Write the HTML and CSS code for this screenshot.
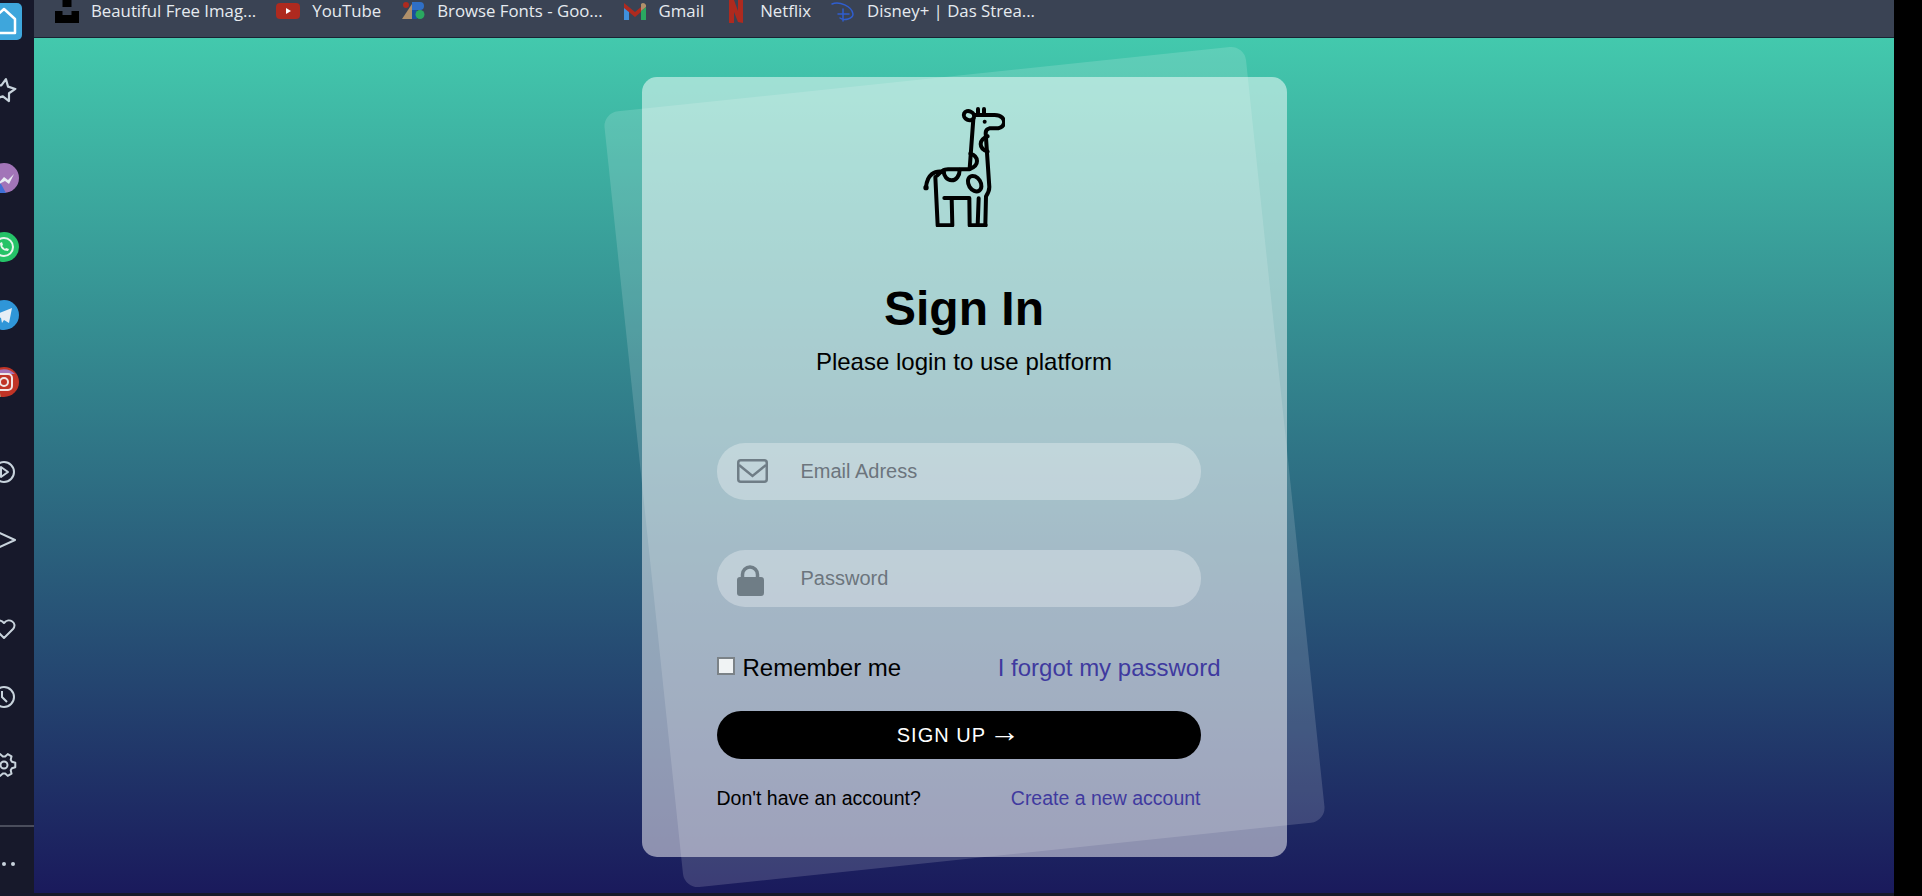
FILE: index.html
```html
<!DOCTYPE html>
<html lang="en">
<head>
    <meta charset="UTF-8">
    <title>Sign In</title>
    <link rel="stylesheet" href="styles.css">
</head>
<body>
    <div class="browser">
        <aside class="sidebar">
            <div class="side-groups">
                <div class="side-group">
                    <span class="side-icon home-tile">
                        <svg viewBox="0 0 30 30" width="30" height="30"><path d="M5 12 15 3l11 10v14H5z" fill="none" stroke="#fff" stroke-width="2.500" stroke-linejoin="round"/></svg>
                    </span>
                    <span class="side-icon">
                        <svg viewBox="0 0 30 30" width="30" height="30"><path d="M15 4l3.400 7 7.600 1-5.500 5.300 1.300 7.700-6.800-3.600-6.800 3.600 1.300-7.700L4 12l7.600-1z" transform="rotate(10 15 15)" fill="none" stroke="#c8d3dc" stroke-width="2.200" stroke-linejoin="round"/></svg>
                    </span>
                </div>
                <div class="side-group">
                    <span class="side-icon icon-up">
                        <svg viewBox="0 0 30 30" width="30" height="30"><circle cx="15" cy="15" r="15" fill="#a275b8"/><path d="M3 26 4 17 12 21 17 30H8z" fill="#3f6fd6"/><path d="M8 22l7-8 4 3 6-6-5 10-4-3z" fill="#e8edf2"/></svg>
                    </span>
                    <span class="side-icon">
                        <svg viewBox="0 0 30 30" width="30" height="30"><circle cx="15" cy="15" r="15" fill="#25c368"/><circle cx="15" cy="15" r="9" fill="none" stroke="#e8f5ee" stroke-width="2"/><path d="M11 11c0 5 3 8 8 8l1-2-3-1-1 1-3-3 1-1-1-3z" fill="#e8f5ee"/></svg>
                    </span>
                    <span class="side-icon">
                        <svg viewBox="0 0 30 30" width="30" height="30"><circle cx="15" cy="15" r="15" fill="#2f96d8"/><path d="M5 15 23 8l-3 15-5-3-2 3-1-5z" fill="#e6eef5"/></svg>
                    </span>
                    <span class="side-icon">
                        <svg viewBox="0 0 30 30" width="30" height="30"><circle cx="15" cy="15" r="15" fill="#c03426"/><path d="M4 7a15 15 0 0 1 22 0z" fill="#a275b8"/><path d="M2 22a15 15 0 0 0 10 8l-2-8z" fill="#b3966a"/><rect x="7" y="7" width="16" height="16" rx="4" fill="none" stroke="#f0e6e4" stroke-width="2"/><circle cx="15" cy="15" r="4" fill="none" stroke="#f0e6e4" stroke-width="2"/></svg>
                    </span>
                </div>
                <div class="side-group">
                    <span class="side-icon">
                        <svg viewBox="0 0 30 30" width="30" height="30"><circle cx="15" cy="15" r="10" fill="none" stroke="#c8d3dc" stroke-width="2"/><path d="M12 10l7 5-7 5z" fill="none" stroke="#c8d3dc" stroke-width="2" stroke-linejoin="round"/></svg>
                    </span>
                    <span class="side-icon">
                        <svg viewBox="0 0 30 30" width="30" height="30"><path d="M4 5l22 10L4 25" fill="none" stroke="#c8d3dc" stroke-width="2" stroke-linejoin="round"/></svg>
                    </span>
                </div>
                <div class="side-group">
                    <span class="side-icon icon-up">
                        <svg viewBox="0 0 30 30" width="30" height="30"><path d="M15 25 6 16c-5-6 4-12 9-6 5-6 14 0 9 6z" fill="none" stroke="#c8d3dc" stroke-width="2" stroke-linejoin="round"/></svg>
                    </span>
                    <span class="side-icon">
                        <svg viewBox="0 0 30 30" width="30" height="30"><circle cx="15" cy="15" r="10" fill="none" stroke="#c8d3dc" stroke-width="2"/><path d="M13 9v6l5 5" fill="none" stroke="#c8d3dc" stroke-width="2"/></svg>
                    </span>
                    <span class="side-icon">
                        <svg viewBox="0 0 30 30" width="30" height="30"><circle cx="15" cy="15" r="3.500" fill="none" stroke="#c8d3dc" stroke-width="2"/><polygon points="22.88,11.82 26.29,12.81 26.29,17.19 22.88,18.18 21.7,20.23 22.54,23.68 18.74,25.87 16.18,23.42 13.82,23.42 11.26,25.87 7.46,23.68 8.3,20.23 7.12,18.18 3.71,17.19 3.71,12.81 7.12,11.82 8.3,9.77 7.46,6.32 11.26,4.13 13.82,6.58 16.18,6.58 18.74,4.13 22.54,6.32 21.7,9.77" fill="none" stroke="#c8d3dc" stroke-width="2" stroke-linejoin="round"/></svg>
                    </span>
                </div>
            </div>
            <div class="side-foot">
                <span class="side-dots">
                    <i></i><i></i><i></i>
                </span>
            </div>
        </aside>

        <div class="main">
            <nav class="bookmarks">
                <a class="bookmark">
                    <svg viewBox="0 0 24 24" width="24" height="24"><path d="M7.500 0h9v7h-9zM0 11h7.500v4h9v-4H24v12H0z" fill="#000"/></svg>
                    <span>Beautiful Free Imag...</span>
                </a>
                <a class="bookmark">
                    <svg viewBox="0 0 24 24" width="24" height="24"><rect y="3" width="24" height="16" rx="4" fill="#ae2a1f"/><path d="M10 8l5 3-5 3z" fill="#fff"/></svg>
                    <span>YouTube</span>
                </a>
                <a class="bookmark">
                    <svg viewBox="0 0 24 24" width="24" height="24"><path d="M1 19 11 4v15z" fill="#b0906a"/><circle cx="5" cy="5" r="3" fill="#ae2a1f"/><path d="M11 2h8a4 4 0 0 1 0 8h-8z" fill="#2f6fc6"/><path d="M11 10h5v9h-5z" fill="#1c4f9c"/><circle cx="19" cy="14.500" r="4.500" fill="#2aa860"/></svg>
                    <span>Browse Fonts - Goo...</span>
                </a>
                <a class="bookmark">
                    <svg viewBox="0 0 24 24" width="24" height="24"><path d="M1 7v13h5V11z" fill="#3f8fdc"/><path d="M18 11v9h5V7z" fill="#2aa860"/><path d="M1 3l11 9 6-5v5l-6 5L1 8z" fill="#ae2a1f"/><path d="M18 4a3 3 0 0 1 5 3l-5 4z" fill="#b0906a"/></svg>
                    <span>Gmail</span>
                </a>
                <a class="bookmark">
                    <svg viewBox="0 0 24 24" width="24" height="24"><path d="M5 0h5l4 11V0h5v23l-5-1-4-10v11H5z" fill="#ae2a1f"/></svg>
                    <span>Netflix</span>
                </a>
                <a class="bookmark">
                    <svg viewBox="0 0 24 24" width="24" height="24"><path d="M1 4c7-3 20 2 21 10 0 5-9 7-13 4M12 9v12M7 14h11" fill="none" stroke="#2f5ed0" stroke-width="1.500" stroke-linecap="round"/></svg>
                    <span>Disney+ | Das Strea...</span>
                </a>
            </nav>

            <main class="page">
                <div class="card">
                    <svg class="logo" viewBox="128 50 246 360" width="82" height="120">
                        <g fill="none" stroke="#000" stroke-width="12" stroke-linecap="round" stroke-linejoin="round">
                            <path d="M293 56v17M311 56v17"/>
                            <ellipse cx="266" cy="76" rx="16" ry="13" transform="rotate(25 266 76)"/>
                            <path d="M281 74h62c20 0 30 12 28 24-2 12-12 16-26 16h-18c-8 2-11 8-11 14l11 162c0 12-6 22-10 28l-2 85"/>
                            <path d="M279 86l-11 149c0 1-2 2-5 2h-60c-14 0-20 6-32 18"/>
                            <path d="M187 244c-24-4-46 8-50 46"/>
                            <path d="M165 260l7 145h44l-2-82M192 323h75l1 82h48"/>
                            <path d="M295 324l-3 81"/>
                            <path d="M270 190c26 8 28 36 -2 46"/>
                            <path d="M190 240c0 18 10 30 24 30s24-14 24-32"/>
                            <path d="M322 138c-28 10-28 36 0 46"/>
                            <ellipse cx="283" cy="280" rx="18" ry="25" transform="rotate(-32 283 280)"/>
                        </g>
                        <circle cx="313" cy="94" r="6" fill="#000"/>
                        <circle cx="137" cy="292" r="8" fill="#000"/>
                    </svg>

                    <h1 class="title">Sign In</h1>
                    <p class="subtitle">Please login to use platform</p>

                    <form class="login-form">
                        <div class="field">
                            <svg class="field-icon mail-icon" viewBox="0 0 31 24" width="31" height="24"><rect x="1.250" y="1.250" width="28.500" height="21.500" rx="2.500" fill="none" stroke="#6f7d86" stroke-width="2.500"/><path d="M2 6l13.500 11L29 6" fill="none" stroke="#6f7d86" stroke-width="2.500"/></svg>
                            <input type="text" placeholder="Email Adress">
                        </div>
                        <div class="field">
                            <svg class="field-icon lock-icon" viewBox="0 0 31 31" width="31" height="31"><path d="M5.500 14V9.500a7.500 7.500 0 0 1 15 0V14" fill="none" stroke="#6f7d86" stroke-width="3.500"/><rect y="12" width="27" height="19" rx="3" fill="#6f7d86"/></svg>
                            <input type="password" placeholder="Password">
                        </div>

                        <div class="options">
                            <label class="remember"><input type="checkbox"> Remember me</label>
                            <a class="link">I forgot my password</a>
                        </div>

                        <button type="button" class="submit">SIGN UP <span class="arrow">&rarr;</span></button>

                        <div class="signup-row">
                            <span>Don't have an account?</span>
                            <a class="link">Create a new account</a>
                        </div>
                    </form>
                </div>
            </main>
        </div>
    </div>
</body>
</html>
```

FILE: styles.css
```css
/* browser frame around the login page */
html, body {
    margin: 0;
    height: 100%;
    background-color: #000;
    overflow: hidden;
}

.browser {
    display: flex;
    width: 1894px;
    height: 896px;
    background-color: #17192b;
}

/* sidebar is scrolled partly out of view on the left */
.sidebar {
    flex: 0 0 34px;
    display: flex;
    flex-direction: column;
    justify-content: space-between;
    overflow: hidden;
    padding-top: 6px;
}

.side-groups {
    display: flex;
    flex-direction: column;
    gap: 60px;
    margin-left: -11px;
}

.side-group {
    display: flex;
    flex-direction: column;
    gap: 37.5px;
}

.side-icon {
    display: block;
    width: 30px;
    height: 30px;
}

.side-icon svg {
    display: block;
}

.icon-up svg {
    margin-top: -1.5px;
}

.home-tile {
    width: 33px;
    margin: -3px 0;
    padding: 3px 0 4px;
    background-color: #3ea6dc;
    border-radius: 5px;
}

.side-foot {
    border-top: 2px solid #4a4d5c;
    height: 71px;
    display: flex;
    padding-top: 35px;
    box-sizing: border-box;
}

.side-dots {
    display: flex;
    gap: 5px;
    margin-left: -7px;
}

.side-dots i {
    width: 4px;
    height: 4px;
    border-radius: 50%;
    background-color: #c8d3dc;
}

.main {
    flex: 1;
    display: flex;
    flex-direction: column;
    height: 893px;
}

.bookmarks {
    display: flex;
    gap: 20px;
    height: 37px;
    padding-left: 21px;
    background-color: #3a4354;
    border-bottom: 1px solid #1a2333;
}

.bookmark {
    display: flex;
    gap: 12px;
    height: 23px;
    align-items: center;
    font-family: "Open Sans", sans-serif;
    font-size: 16.8px;
    color: #e6ebf0;
    white-space: nowrap;
}

.bookmark span {
    padding-bottom: 2px;
}

.bookmark svg {
    display: block;
}

.page {
    flex: 1;
    display: flex;
    justify-content: center;
    align-items: flex-start;
    padding-top: 39px;
    background: linear-gradient(#43c9ad, #1a1a5c);
}

.card {
    position: relative;
    width: 645px;
    height: 780px;
    box-sizing: border-box;
    padding-top: 30px;
    background-color: rgba(255, 255, 255, 0.5);
    border-radius: 15px;
    font-family: "Liberation Sans", Arial, sans-serif;
    color: #000;
    text-align: center;
}

.card::before {
    content: "";
    position: absolute;
    inset: 0;
    background-color: rgba(255, 255, 255, 0.15);
    border-radius: 15px;
    transform: rotate(-6deg);
}

.logo {
    position: relative;
    display: block;
    margin: 0 auto;
}

.title {
    position: relative;
    margin: 54px 0 0;
    font-size: 48px;
    line-height: 56px;
    font-weight: bold;
}

.subtitle {
    position: relative;
    margin: 11px 0 0;
    font-size: 24px;
    line-height: 28px;
}

.login-form {
    position: relative;
    width: 484px;
    margin: 67px 0 0 75px;
    text-align: left;
}

.field {
    display: flex;
    align-items: center;
    height: 57px;
    margin-bottom: 50px;
    padding-left: 20px;
    background-color: rgba(255, 255, 255, 0.3);
    border-radius: 28px;
}

.field-icon {
    flex: 0 0 31px;
}

.mail-icon {
    margin-top: -2px;
}

.lock-icon {
    margin-top: 3px;
}

.field input {
    flex: 1;
    min-width: 0;
    margin-left: 33px;
    padding: 0;
    border: none;
    outline: none;
    background: none;
    font-family: inherit;
    font-size: 20px;
    color: #333;
}

.field input::placeholder {
    color: #6c757d;
}

.options {
    display: flex;
    justify-content: space-between;
    align-items: center;
    width: 504px;
    margin-top: -3px;
    font-size: 24px;
    line-height: 28px;
}

.remember {
    display: flex;
    align-items: center;
    gap: 8px;
}

.remember input {
    appearance: none;
    width: 18px;
    height: 18px;
    margin: -4px 0 0;
    background-color: #f0f3f4;
    border: 2px solid #7b8287;
    box-sizing: border-box;
}

.link {
    color: #3f3a9f;
    text-decoration: none;
}

.submit {
    display: block;
    width: 100%;
    height: 48px;
    margin-top: 29px;
    padding: 0;
    border: none;
    border-radius: 24px;
    background-color: #000;
    color: #fff;
    font-family: inherit;
    font-size: 20px;
    letter-spacing: 1px;
    cursor: pointer;
}

.arrow {
    font-size: 31px;
    letter-spacing: 0;
    line-height: 0;
    margin-left: -3px;
}

.signup-row {
    display: flex;
    justify-content: space-between;
    margin-top: 28px;
    font-size: 19.5px;
    line-height: 22px;
}
```
